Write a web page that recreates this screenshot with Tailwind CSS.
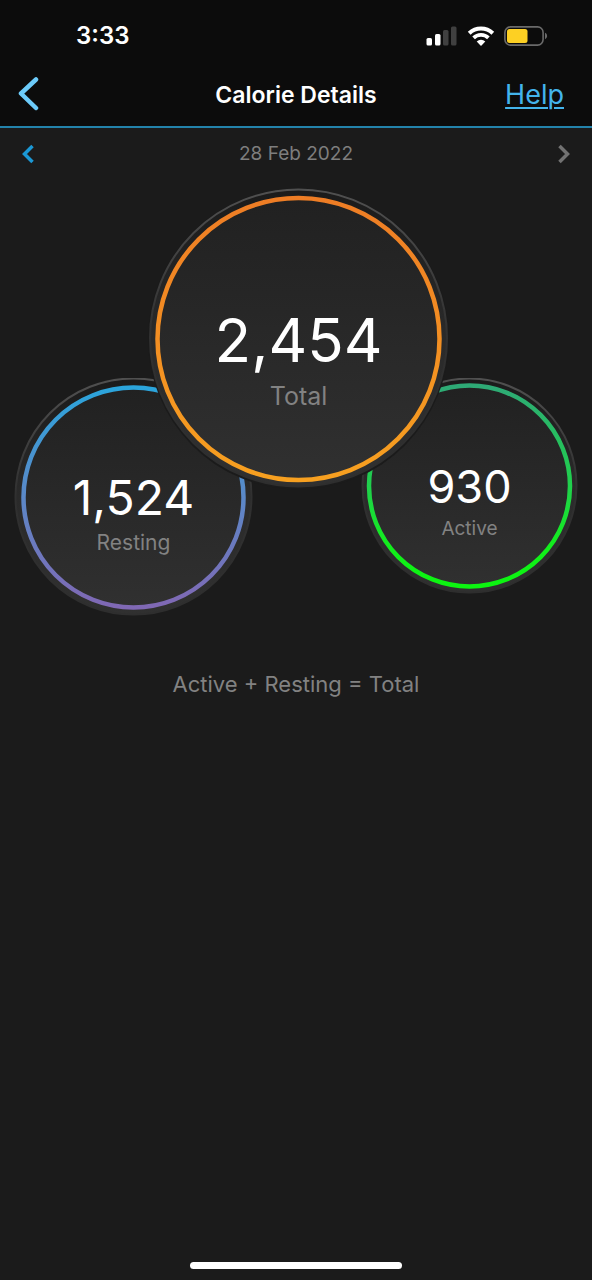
<!DOCTYPE html>
<html lang="en">
<head>
<meta charset="utf-8">
<meta name="viewport" content="width=device-width, initial-scale=1">
<title>Calorie Details</title>
<script src="https://cdn.jsdelivr.net/npm/@tailwindcss/browser@4"></script>
</head>
<body class="flex min-h-screen flex-col bg-[#1b1b1b] font-['Inter','Liberation_Sans',sans-serif] text-white">
  <header class="border-b-2 border-[#2383ab] bg-[#0c0c0c]">
    <div class="flex h-16 items-center justify-between pt-2 pr-11 pl-[76px]">
      <time class="text-[24px] leading-7 font-semibold">3:33</time>
      <div class="flex items-center gap-[9px]">
        <svg class="h-5 w-8" viewBox="0 0 32 20" role="img" aria-label="Signal">
          <rect x="0.5" y="12" width="5.5" height="7.5" rx="1.5" fill="#fff"/>
          <rect x="9" y="8" width="5.5" height="11.5" rx="1.5" fill="#fff"/>
          <rect x="17" y="4" width="5.5" height="15.5" rx="1.5" fill="#404040"/>
          <rect x="25" y="0.5" width="5.5" height="19" rx="1.5" fill="#404040"/>
        </svg>
        <svg class="h-5 w-7" viewBox="0 0 28 20" fill="none" role="img" aria-label="Wi-Fi">
          <path d="M2.2 7.2a17 17 0 0 1 23.6 0" stroke="#fff" stroke-width="4"/>
          <path d="M6.6 11.9a10.7 10.7 0 0 1 14.800 0" stroke="#fff" stroke-width="3.800"/>
          <path d="M14 20l-4.3-4.400a6.200 6.200 0 0 1 8.600 0z" fill="#fff"/>
        </svg>
        <svg class="h-5 w-11" viewBox="0 0 44 20" role="img" aria-label="Battery">
          <rect x="0.9" y="0.9" width="38.2" height="18.2" rx="5.5" fill="none" stroke="#6a6a6a" stroke-width="1.6"/>
          <rect x="3" y="3" width="20.5" height="14" rx="2.5" fill="#fdd023"/>
          <path d="M41 6.8c2.8 1.2 2.8 5.200 0 6.400z" fill="#6a6a6a"/>
        </svg>
      </div>
    </div>
    <nav class="grid h-[62px] grid-cols-[1fr_auto_1fr] items-center pr-7 pl-4">
      <button type="button" aria-label="Back" class="justify-self-start">
        <svg class="h-9 w-6" viewBox="0 0 24 36" fill="none" stroke="#6ccbfa" stroke-width="4.500" stroke-linecap="round" stroke-linejoin="round"><path d="M20 2.500L5 16.500l15 14.500"/></svg>
      </button>
      <h1 class="pl-3 text-[23px] leading-7 font-semibold">Calorie Details</h1>
      <a href="#" class="justify-self-end text-[27px] leading-8 text-[#43b4ec] underline decoration-2 underline-offset-3">Help</a>
    </nav>
  </header>

  <main class="flex flex-1 flex-col">
    <div class="flex h-[52px] items-center justify-between px-5">
      <button type="button" aria-label="Previous day">
        <svg class="h-5 w-4" viewBox="0 0 16 20" fill="none" stroke="#1b98d5" stroke-width="3.500"><path d="M12.500 2L4.500 10l8 8"/></svg>
      </button>
      <p class="text-[19px] leading-6 text-[#7e7e7e]">28 Feb 2022</p>
      <button type="button" aria-label="Next day">
        <svg class="h-5 w-4" viewBox="0 0 16 20" fill="none" stroke="#727272" stroke-width="3.500"><path d="M3.500 2L11.500 10l-8 8"/></svg>
      </button>
    </div>

    <section aria-label="Calories" class="flex items-start justify-center pt-[9px]">
      <div class="relative mt-[189px] h-[238px] w-[239px] shrink-0 pt-[90px] text-center">
        <svg class="absolute inset-0 h-full w-full" viewBox="0 0 239 238" fill="none" aria-hidden="true">
          <defs>
            <linearGradient id="rim" x1="0" y1="0" x2="0" y2="1"><stop offset="0" stop-color="#505050"/><stop offset="0.5" stop-color="#303030"/><stop offset="1" stop-color="#2e2e2e"/></linearGradient>
            <linearGradient id="band" x1="0" y1="0" x2="0" y2="1"><stop offset="0" stop-color="#1b1b1b"/><stop offset="0.5" stop-color="#2a2a2a"/><stop offset="1" stop-color="#303030"/></linearGradient>
            <linearGradient id="face" x1="0" y1="0" x2="0" y2="1"><stop offset="0" stop-color="#212121"/><stop offset="1" stop-color="#303030"/></linearGradient>
            <linearGradient id="blue" x1="0" y1="0" x2="0" y2="1"><stop offset="0" stop-color="#2ba5dc"/><stop offset="0.5" stop-color="#5b88c8"/><stop offset="1" stop-color="#8068b4"/></linearGradient>
          </defs>
          <circle cx="119.500" cy="118.500" r="118" fill="url(#band)" stroke="url(#rim)" stroke-width="2"/>
          <circle cx="119.500" cy="119.500" r="110" fill="url(#face)" stroke="url(#blue)" stroke-width="4.500"/>
        </svg>
        <p class="relative text-[48px] leading-[60px]">1,524</p>
        <p class="relative pt-px text-[21px] leading-7 text-[#828282]">Resting</p>
      </div>
      <div class="relative z-10 -mr-[87px] -ml-[104px] h-[298px] w-[299px] shrink-0 pt-[112px] text-center">
        <svg class="absolute inset-0 h-full w-full overflow-visible" viewBox="0 0 299 298" fill="none" aria-hidden="true">
          <defs>
            <linearGradient id="orange" x1="0" y1="0" x2="0" y2="1"><stop offset="0" stop-color="#ee7d25"/><stop offset="1" stop-color="#f7a020"/></linearGradient>
          </defs>
          <circle cx="149.500" cy="150" r="150.500" fill="#1b1b1b"/>
          <circle cx="149.500" cy="149" r="148.500" fill="url(#band)" stroke="url(#rim)" stroke-width="2"/>
          <circle cx="149.500" cy="150" r="141" fill="url(#face)" stroke="url(#orange)" stroke-width="4.500"/>
        </svg>
        <p class="relative text-[60px] leading-[78px]">2,454</p>
        <p class="relative pt-px text-[25px] leading-8 text-[#828282]">Total</p>
      </div>
      <div class="relative mt-[189px] h-[216px] w-[217px] shrink-0 pt-[80px] text-center">
        <svg class="absolute inset-0 h-full w-full" viewBox="0 0 217 216" fill="none" aria-hidden="true">
          <defs>
            <linearGradient id="green" x1="0" y1="0" x2="0" y2="1"><stop offset="0" stop-color="#2eaa76"/><stop offset="0.5" stop-color="#20d04c"/><stop offset="0.8" stop-color="#12ee1c"/><stop offset="1" stop-color="#0cf510"/></linearGradient>
          </defs>
          <circle cx="108.500" cy="107.500" r="107" fill="url(#band)" stroke="url(#rim)" stroke-width="2"/>
          <circle cx="108.500" cy="108" r="100.500" fill="url(#face)" stroke="url(#green)" stroke-width="4.500"/>
        </svg>
        <p class="relative text-[45px] leading-[58px]">930</p>
        <p class="relative pt-px text-[19px] leading-6 text-[#828282]">Active</p>
      </div>
    </section>

    <p class="mt-[52px] text-center text-[22px] leading-8 text-[#828282]">Active + Resting = Total</p>
  </main>

  <footer class="flex justify-center pb-[11px]">
    <div class="h-[7px] w-[212px] rounded-full bg-white"></div>
  </footer>
</body>
</html>
